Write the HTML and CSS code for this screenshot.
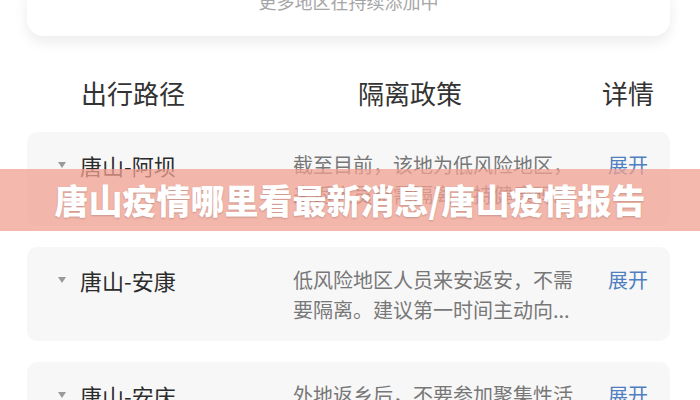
FILE: index.html
```
<!DOCTYPE html>
<html lang="zh-CN">
<head>
    <meta charset="UTF-8">
    <meta name="viewport" content="width=device-width, initial-scale=1.0">
    <title>唐山疫情哪里看最新消息</title>
    <link rel="stylesheet" href="styles.css">
</head>
<body>
    <div class="page">
        <div class="more-card">更多地区在持续添加中</div>

        <div class="table-head">
            <span>出行路径</span>
            <span>隔离政策</span>
            <span>详情</span>
        </div>

        <div class="item">
            <div class="item-name"><span class="arrow"></span>唐山-阿坝</div>
            <div class="item-desc">截至目前，该地为低风险地区，来返人员无需隔离，持健康码...</div>
            <div class="item-more">展开</div>
        </div>

        <div class="item">
            <div class="item-name"><span class="arrow"></span>唐山-安康</div>
            <div class="item-desc">低风险地区人员来安返安，不需要隔离。建议第一时间主动向...</div>
            <div class="item-more">展开</div>
        </div>

        <div class="item">
            <div class="item-name"><span class="arrow"></span>唐山-安庆</div>
            <div class="item-desc">外地返乡后，不要参加聚集性活动，主动报备...</div>
            <div class="item-more">展开</div>
        </div>
    </div>

    <div class="banner">唐山疫情哪里看最新消息/唐山疫情报告</div>
</body>
</html>
```

FILE: styles.css
```
body {
    margin: 0;
    background: #fff;
    font-family: "Noto Sans CJK SC", "Noto Sans", sans-serif;
    color: #333;
    overflow: hidden;
}
.page {
    padding: 0 30px 0 27px;
}
.more-card {
    margin-top: -9px;
    padding-bottom: 25px;
    line-height: 20px;
    font-size: 18px;
    color: #a6a6a6;
    text-align: center;
    background: #fff;
    border-radius: 0 0 16px 16px;
    box-shadow: 0 6px 14px rgba(0, 0, 0, 0.08);
}
.table-head {
    display: grid;
    grid-template-columns: 277px 1fr auto;
    padding: 44px 16px 26px 54px;
    font-size: 26px;
    line-height: 26px;
    color: #333;
}
.item {
    display: grid;
    grid-template-columns: 235px 285px 1fr;
    align-items: start;
    height: 94px;
    box-sizing: border-box;
    padding: 18px 22px 0 31px;
    margin-bottom: 21px;
    background: #f7f7f7;
    border-radius: 10px;
}
.item-name {
    display: flex;
    align-items: center;
    font-size: 22px;
    line-height: 30px;
    color: #2b2b2b;
}
.arrow {
    width: 0;
    height: 0;
    margin-right: 14px;
    border-left: 4.5px solid transparent;
    border-right: 4.5px solid transparent;
    border-top: 6px solid #9a9a9a;
}
.item-desc {
    font-size: 20px;
    line-height: 30px;
    color: #777;
    height: 60px;
    overflow: hidden;
}
.item-more {
    font-size: 20px;
    line-height: 30px;
    color: #4f7fc0;
    text-align: right;
}
.banner {
    position: absolute;
    left: 0;
    right: 0;
    top: 169px;
    height: 62px;
    line-height: 62px;
    background: rgba(242, 160, 145, 0.75);
    color: #fff;
    font-size: 34px;
    font-weight: 900;
    text-align: center;
    text-shadow: 0 1px 2px rgba(0, 0, 0, 0.18);
}
```
